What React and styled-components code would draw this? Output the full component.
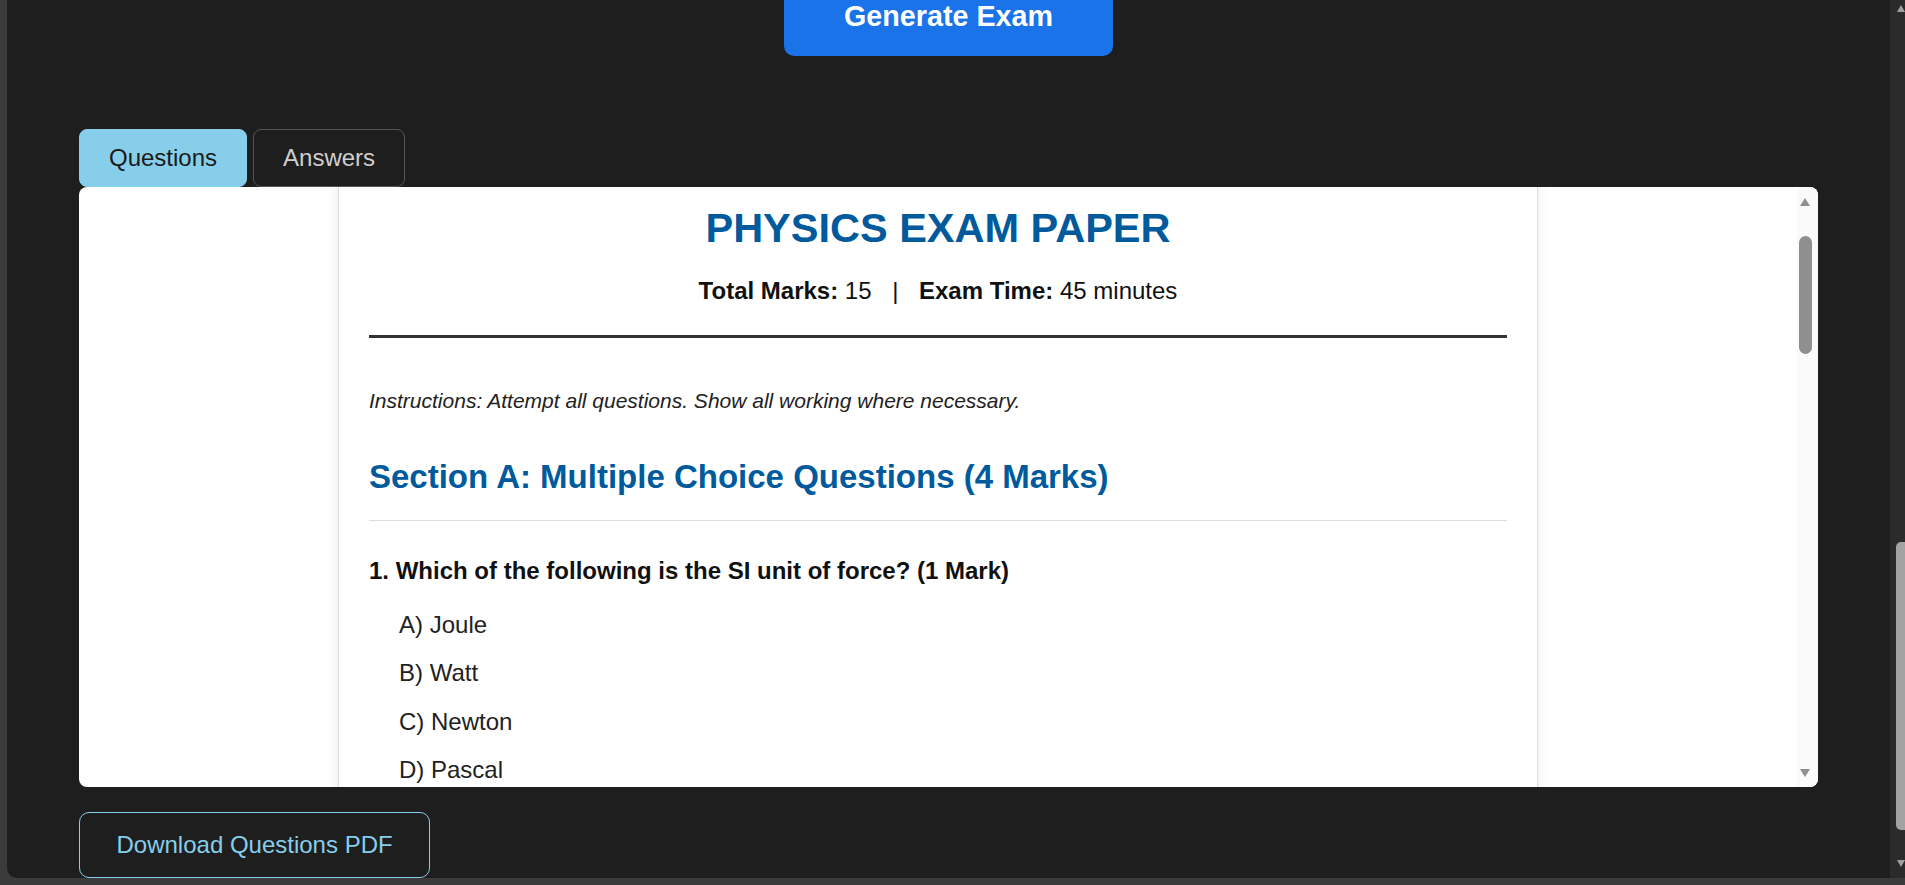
import React, { useLayoutEffect, useRef, useState } from "react";
import styled, { createGlobalStyle } from "styled-components";

const sectionA = [
  {
    q: "Which of the following is the SI unit of force? (1 Mark)",
    options: ["Joule", "Watt", "Newton", "Pascal"],
    answer: "C) Newton",
  },
  {
    q: "A car accelerates uniformly from rest to 20 m/s in 5 seconds. What is its acceleration? (1 Mark)",
    options: ["2 m/s²", "4 m/s²", "5 m/s²", "100 m/s²"],
    answer: "B) 4 m/s²",
  },
  {
    q: "Which of the following is a scalar quantity? (1 Mark)",
    options: ["Velocity", "Displacement", "Speed", "Force"],
    answer: "C) Speed",
  },
  {
    q: "The rate of change of momentum is equal to: (1 Mark)",
    options: ["Work", "Power", "Impulse", "Force"],
    answer: "D) Force",
  },
];

const sectionB = [
  { q: "State Newton's first law of motion. (2 Marks)", lines: 3 },
  { q: "Calculate the weight of a 5 kg object on Earth (g = 9.8 m/s²). (2 Marks)", lines: 3 },
  { q: "Define power and give its SI unit. (1 Mark)", lines: 2 },
];

const sectionC = [
  {
    q: "Explain the difference between kinetic and potential energy, giving one example of each. (3 Marks)",
    lines: 3,
  },
  {
    q: "A ball of mass 0.5 kg is dropped from a height of 10 m. Calculate its kinetic energy just before it hits the ground. (3 Marks)",
    lines: 3,
  },
];

const letters = ["A", "B", "C", "D"];

// headless chrome hides native scrollbars, so draw our own bar that follows the scroll box
function ScrollBar({ target, light }) {
  const [m, setM] = useState({ pos: 0, size: 1 });

  useLayoutEffect(() => {
    const el = target.current;
    if (!el) return undefined;
    const update = () => {
      const max = el.scrollHeight - el.clientHeight;
      setM({
        pos: max > 0 ? el.scrollTop / max : 0,
        size: Math.min(1, el.clientHeight / el.scrollHeight),
      });
    };
    update();
    const raf = requestAnimationFrame(update);
    const t = setTimeout(update, 60);
    el.addEventListener("scroll", update);
    window.addEventListener("resize", update);
    return () => {
      cancelAnimationFrame(raf);
      clearTimeout(t);
      el.removeEventListener("scroll", update);
      window.removeEventListener("resize", update);
    };
  }, [target]);

  const scrollBy = (dy) => {
    if (target.current) target.current.scrollTop += dy;
  };

  return (
    <Bar $light={light}>
      <ArrowButton $light={light} $down={false} onClick={() => scrollBy(-40)}>
        <Arrow $light={light} $down={false} />
      </ArrowButton>
      <Track>
        <Spacer style={{ flexGrow: m.pos }} />
        <Thumb $light={light} style={{ height: `${m.size * 100}%` }} />
        <Spacer style={{ flexGrow: 1 - m.pos }} />
      </Track>
      <ArrowButton $light={light} $down onClick={() => scrollBy(40)}>
        <Arrow $light={light} $down />
      </ArrowButton>
    </Bar>
  );
}

// scroll box so that el sits `offset` px below the box's top edge
const scrollToOffset = (box, el, offset) => {
  const top =
    el.getBoundingClientRect().top - box.getBoundingClientRect().top + box.scrollTop;
  box.scrollTop = top - offset;
};

function App() {
  const [tab, setTab] = useState("questions");
  const viewRef = useRef(null);
  const btnRef = useRef(null);
  const panelRef = useRef(null);
  const titleRef = useRef(null);

  useLayoutEffect(() => {
    if (viewRef.current && btnRef.current) scrollToOffset(viewRef.current, btnRef.current, -24);
    if (panelRef.current && titleRef.current) scrollToOffset(panelRef.current, titleRef.current, 17.5);
  }, []);

  return (
    <>
      <GlobalStyle />
      <Frame>
        <Window>
          <Viewport ref={viewRef}>
            <Page>
              <Intro>
                <AppTitle>AI Exam Generator</AppTitle>
                <AppSub>Fill in the details below to create an exam paper and its answer key.</AppSub>
              </Intro>
              <FormCard>
                <Field>
                  <Label>Subject</Label>
                  <Input defaultValue="Physics" />
                </Field>
                <Field>
                  <Label>Grade / Level</Label>
                  <Input defaultValue="Grade 10" />
                </Field>
                <Field>
                  <Label>Topics</Label>
                  <TextArea $h={180} defaultValue="Forces and motion, Newton's laws, work, energy and power" />
                </Field>
                <FieldRow $cols={2}>
                  <Field>
                    <Label>Total Marks</Label>
                    <Input defaultValue="15" />
                  </Field>
                  <Field>
                    <Label>Exam Time</Label>
                    <Input defaultValue="45 minutes" />
                  </Field>
                </FieldRow>
                <FieldRow $cols={3}>
                  <Field>
                    <Label>Multiple Choice</Label>
                    <Input defaultValue="4" />
                  </Field>
                  <Field>
                    <Label>Short Answer</Label>
                    <Input defaultValue="3" />
                  </Field>
                  <Field>
                    <Label>Long Answer</Label>
                    <Input defaultValue="2" />
                  </Field>
                </FieldRow>
                <Field>
                  <Label>Difficulty</Label>
                  <Input defaultValue="Medium" />
                </Field>
                <Field>
                  <Label>Additional Instructions</Label>
                  <TextArea $h={150} defaultValue="Attempt all questions. Show all working where necessary." />
                </Field>
                <Field>
                  <Label>Syllabus (optional)</Label>
                  <DropZone>Drop a PDF here or click to upload</DropZone>
                </Field>
              </FormCard>

              <GenerateRow>
                <GenerateButton ref={btnRef}>Generate Exam</GenerateButton>
              </GenerateRow>

              <TabRow>
                <Tab $active={tab === "questions"} onClick={() => setTab("questions")}>
                  Questions
                </Tab>
                <Tab $active={tab === "answers"} onClick={() => setTab("answers")}>
                  Answers
                </Tab>
              </TabRow>

              <Panel>
                <PanelScroll ref={panelRef}>
                  <Paper>
                    <StudentInfo>
                      <span>Name: ____________________</span>
                      <span>Class: __________</span>
                      <span>Date: __________</span>
                    </StudentInfo>
                    <PaperHead>
                      <Title ref={titleRef}>PHYSICS EXAM PAPER</Title>
                      <Meta>
                        <b>Total Marks:</b> 15<Sep>|</Sep>
                        <b>Exam Time:</b> 45 minutes
                      </Meta>
                    </PaperHead>
                    <Instructions>
                      Instructions: Attempt all questions. Show all working where necessary.
                    </Instructions>

                    <SectionTitle>Section A: Multiple Choice Questions (4 Marks)</SectionTitle>
                    {sectionA.map((item, i) => (
                      <Question key={item.q}>
                        <QText>
                          {i + 1}. {item.q}
                        </QText>
                        {tab === "questions" ? (
                          <Options>
                            {item.options.map((o, j) => (
                              <Option key={o}>
                                {letters[j]}) {o}
                              </Option>
                            ))}
                          </Options>
                        ) : (
                          <Options>
                            <Option>Answer: {item.answer}</Option>
                          </Options>
                        )}
                      </Question>
                    ))}

                    <SectionTitle>Section B: Short Answer Questions (5 Marks)</SectionTitle>
                    {sectionB.map((item, i) => (
                      <Question key={item.q}>
                        <QText>
                          {i + 5}. {item.q}
                        </QText>
                        <AnswerSpace $lines={item.lines} />
                      </Question>
                    ))}

                    <SectionTitle>Section C: Long Answer Questions (6 Marks)</SectionTitle>
                    {sectionC.map((item, i) => (
                      <Question key={item.q}>
                        <QText>
                          {i + 8}. {item.q}
                        </QText>
                        <AnswerSpace $lines={item.lines} />
                      </Question>
                    ))}
                  </Paper>
                </PanelScroll>
                <ScrollBar target={panelRef} light />
              </Panel>

              <DownloadButton>
                {tab === "questions" ? "Download Questions PDF" : "Download Answers PDF"}
              </DownloadButton>
            </Page>
          </Viewport>
          <ScrollBar target={viewRef} light={false} />
        </Window>
      </Frame>
    </>
  );
}

export default App;

const GlobalStyle = createGlobalStyle`
  html, body {
    margin: 0;
    padding: 0;
    height: 100%;
    overflow: hidden;
    background: #3b3b3b;
  }
  body {
    font-family: "Liberation Sans", Arial, Helvetica, sans-serif;
  }
  #root {
    height: 100%;
  }
  * {
    box-sizing: border-box;
  }
`;

const Frame = styled.div`
  height: 100vh;
  padding: 0 0 7px 7px;
  background: #3b3b3b;
`;

const Window = styled.div`
  display: flex;
  height: 100%;
  background: #1e1e1e;
  border-bottom-left-radius: 10px;
  overflow: hidden;
`;

const Viewport = styled.div`
  flex: 1;
  min-width: 0;
  overflow-y: auto;
  overflow-x: hidden;
  scrollbar-width: none;
`;

/* scrollbar parts */
const Bar = styled.div`
  flex: none;
  width: ${(p) => (p.$light ? "21px" : "15px")};
  display: flex;
  flex-direction: column;
  background: ${(p) => (p.$light ? "#fafafa" : "#2b2b2b")};
`;

const ArrowButton = styled.div`
  flex: none;
  height: ${(p) => (p.$light ? "20px" : p.$down ? "18px" : "15px")};
  padding: ${(p) =>
    p.$light ? (p.$down ? "2px 0 0 3px" : "11px 0 0 3px") : p.$down ? "0 0 0 7px" : "5px 0 0 7px"};
  cursor: default;
`;

const Arrow = styled.div`
  width: 0;
  height: 0;
  border-left: ${(p) => (p.$light ? "5.5px" : "4.5px")} solid transparent;
  border-right: ${(p) => (p.$light ? "5.5px" : "4.5px")} solid transparent;
  ${(p) => (p.$down ? "border-top" : "border-bottom")}: ${(p) => (p.$light ? "8px" : "7px")} solid
    ${(p) => (p.$light ? "#8f8f8f" : "#a0a0a0")};
`;

const Track = styled.div`
  flex: 1;
  min-height: 0;
  display: flex;
  flex-direction: column;
`;

const Spacer = styled.div`
  flex-shrink: 1;
  flex-basis: 0;
  min-height: 0;
`;

const Thumb = styled.div`
  flex: none;
  min-height: 20px;
  margin-left: ${(p) => (p.$light ? "2px" : "6px")};
  width: ${(p) => (p.$light ? "13px" : "9px")};
  background: ${(p) => (p.$light ? "#8f8f8f" : "#a3a3a3")};
  border-radius: ${(p) => (p.$light ? "7px" : "5px 0 0 5px")};
`;

const Page = styled.div`
  padding: 60px 72px 90px;
  color: #e6e6e6;
`;

const Intro = styled.div`
  text-align: center;
  margin-bottom: 40px;
`;

const AppTitle = styled.h1`
  margin: 0 0 16px;
  font-size: 40px;
  color: #ffffff;
`;

const AppSub = styled.p`
  margin: 0;
  font-size: 22px;
  color: #b5b5b5;
`;

const FormCard = styled.div`
  max-width: 900px;
  margin: 0 auto 67px;
  padding: 40px;
  background: #262626;
  border: 1px solid #333;
  border-radius: 12px;
  display: flex;
  flex-direction: column;
  gap: 28px;
`;

const FieldRow = styled.div`
  display: grid;
  grid-template-columns: repeat(${(p) => p.$cols}, 1fr);
  gap: 24px;
`;

const Field = styled.label`
  display: flex;
  flex-direction: column;
  gap: 10px;
`;

const Label = styled.span`
  font-size: 22px;
  color: #d0d0d0;
`;

const Input = styled.input`
  height: 56px;
  padding: 0 16px;
  font-size: 20px;
  font-family: inherit;
  color: #eee;
  background: #1e1e1e;
  border: 1px solid #555;
  border-radius: 8px;
`;

const TextArea = styled.textarea`
  height: ${(p) => p.$h}px;
  padding: 14px 16px;
  font-size: 20px;
  font-family: inherit;
  color: #eee;
  background: #1e1e1e;
  border: 1px solid #555;
  border-radius: 8px;
  resize: none;
`;

const DropZone = styled.div`
  height: 150px;
  display: flex;
  align-items: center;
  justify-content: center;
  font-size: 20px;
  color: #999;
  border: 2px dashed #555;
  border-radius: 8px;
`;

const GenerateRow = styled.div`
  display: flex;
  justify-content: center;
  margin-bottom: 73px;
`;

const GenerateButton = styled.button`
  padding: 23.5px 60px;
  font-family: inherit;
  font-size: 28.7px;
  font-weight: 700;
  line-height: normal;
  color: #ffffff;
  background: #1a73e8;
  border: none;
  border-radius: 10px;
  cursor: pointer;
`;

const TabRow = styled.div`
  display: flex;
  gap: 6px;
`;

const Tab = styled.button`
  padding: 14.2px 29px;
  font-family: inherit;
  font-size: 24px;
  line-height: normal;
  color: ${(p) => (p.$active ? "#1a1a1a" : "#cfcfcf")};
  background: ${(p) => (p.$active ? "#87ceeb" : "transparent")};
  border: 1px solid ${(p) => (p.$active ? "#87ceeb" : "#555")};
  border-radius: 8px;
  cursor: pointer;
`;

const Panel = styled.div`
  display: flex;
  height: 600px;
  background: #ffffff;
  border-radius: 8px;
  overflow: hidden;
`;

const PanelScroll = styled.div`
  flex: 1;
  min-width: 0;
  padding: 20px;
  overflow-y: auto;
  scrollbar-width: none;
`;

const Paper = styled.div`
  width: 1200px;
  margin: 0 auto;
  padding: 30px;
  color: #222;
  background: #ffffff;
  border: 1px solid #dcdcdc;
  box-shadow: 0 0 12px rgba(0, 0, 0, 0.08);
`;

const StudentInfo = styled.div`
  display: flex;
  justify-content: space-between;
  padding: 20px 0;
  margin-bottom: 46px;
  border-bottom: 1px dashed #ccc;
  font-size: 22px;
  line-height: normal;
  color: #444;
`;

const PaperHead = styled.div`
  padding-bottom: 29.5px;
  border-bottom: 3px solid #333;
  margin-bottom: 51.6px;
  text-align: center;
`;

const Title = styled.h1`
  margin: 0 0 25px;
  font-size: 41.5px;
  font-weight: 700;
  line-height: normal;
  color: #005a9c;
`;

const Meta = styled.p`
  margin: 0;
  font-size: 24px;
  line-height: normal;
  color: #111;
`;

const Sep = styled.span`
  padding: 0 20.6px;
`;

const Instructions = styled.p`
  margin: 0 0 44.6px;
  font-size: 21px;
  font-style: italic;
  line-height: normal;
  color: #222;
`;

const SectionTitle = styled.h2`
  margin: 0 0 36px;
  padding-bottom: 24px;
  border-bottom: 1px solid #ddd;
  font-size: 33px;
  font-weight: 700;
  line-height: normal;
  color: #005a9c;
`;

const Question = styled.div`
  margin-bottom: 36px;

  & + h2 {
    margin-top: 44px;
  }
`;

const QText = styled.p`
  margin: 0 0 26px;
  font-size: 24px;
  font-weight: 700;
  line-height: normal;
  color: #111;
`;

const Options = styled.ul`
  list-style: none;
  margin: 0;
  padding-left: 30px;
  display: flex;
  flex-direction: column;
  gap: 20.4px;
`;

const Option = styled.li`
  font-size: 24px;
  line-height: normal;
  color: #222;
`;

const AnswerSpace = styled.div`
  height: ${(p) => p.$lines * 36}px;
  background: repeating-linear-gradient(
    to bottom,
    transparent 0,
    transparent 35px,
    #cfcfcf 35px,
    #cfcfcf 36px
  );
`;

const DownloadButton = styled.button`
  margin-top: 25px;
  padding: 18px 36.5px;
  font-family: inherit;
  font-size: 24px;
  line-height: normal;
  color: #87ceeb;
  background: transparent;
  border: 1px solid #87ceeb;
  border-radius: 10px;
  cursor: pointer;
`;
